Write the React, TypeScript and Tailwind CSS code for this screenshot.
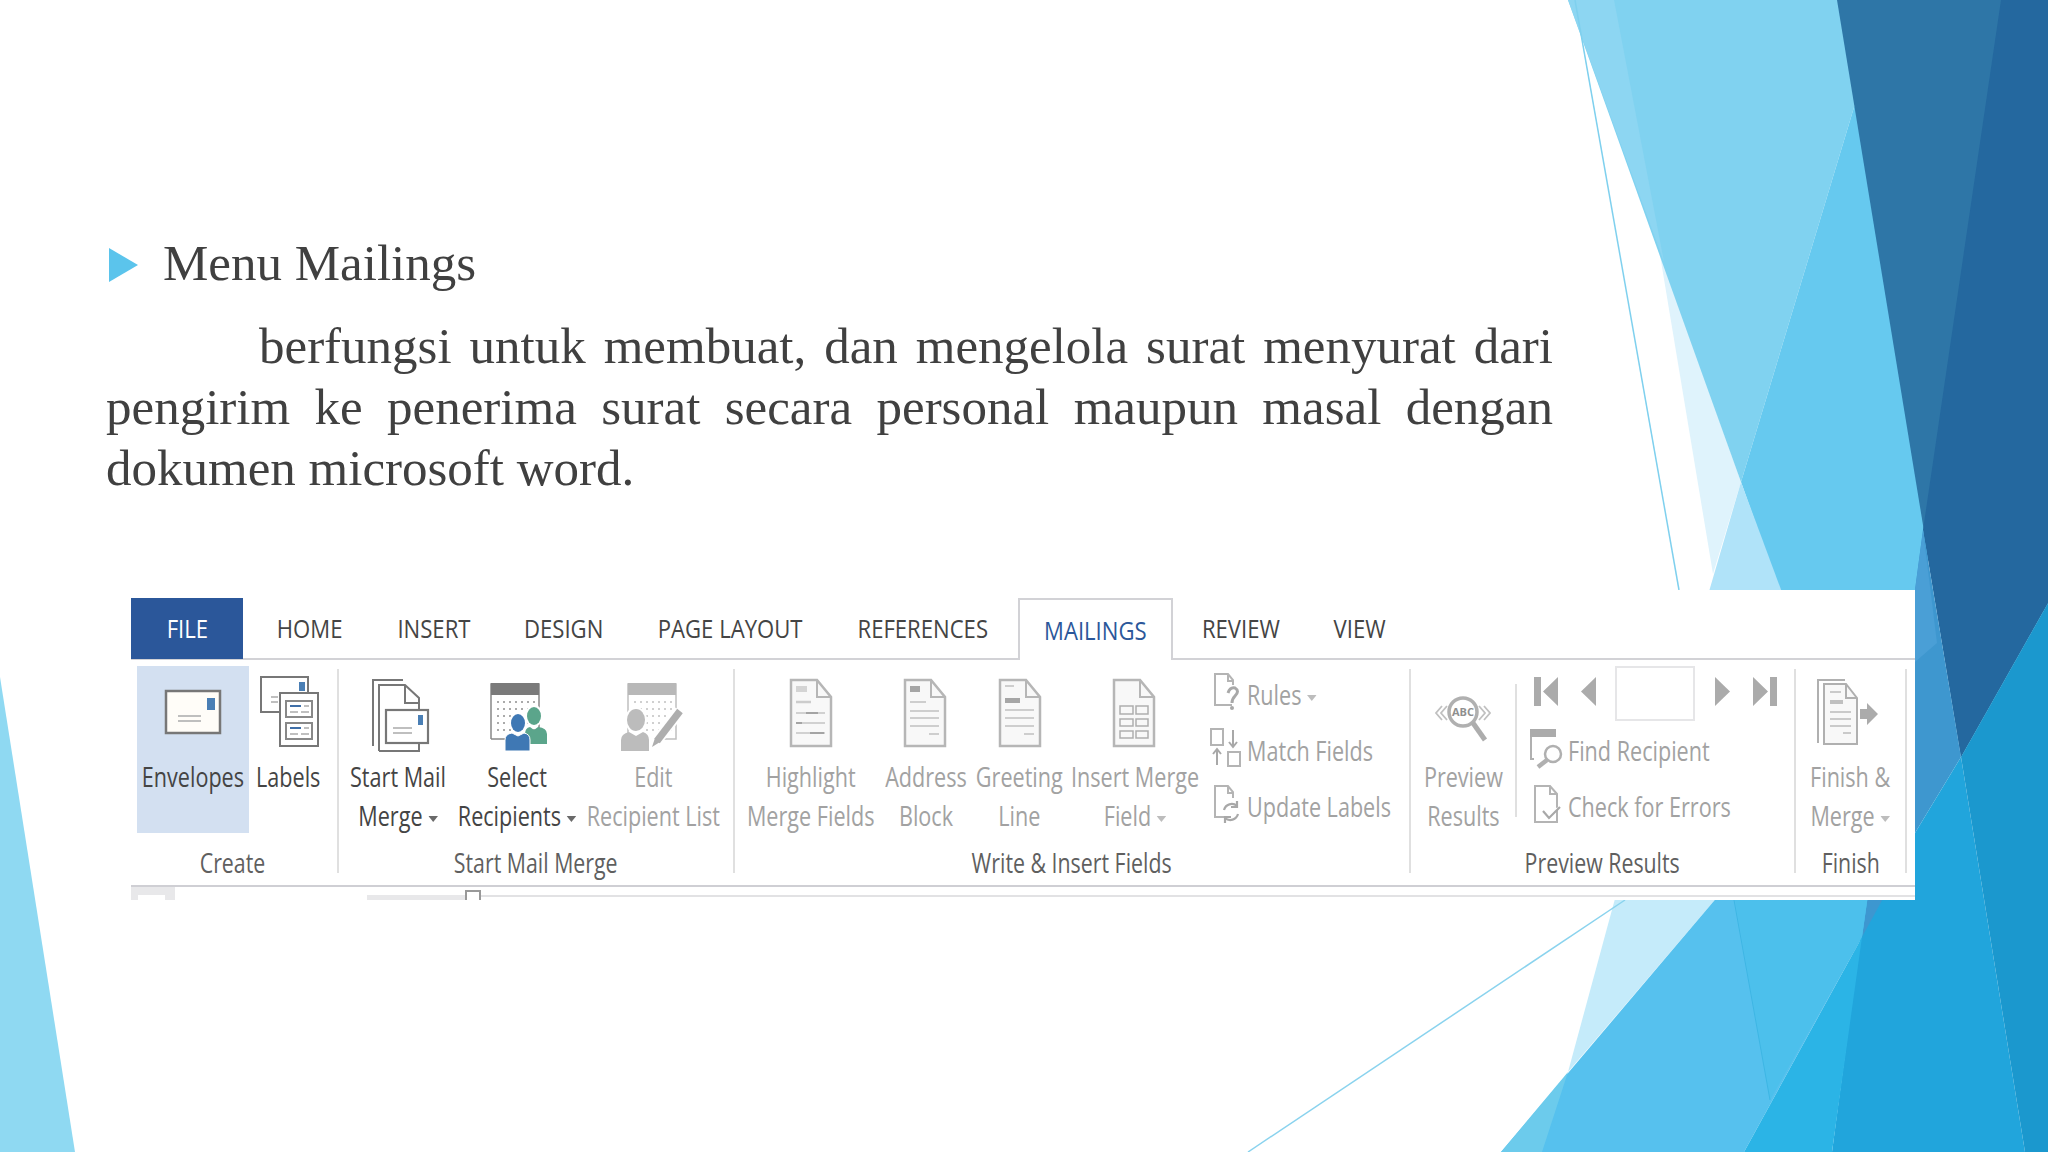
import type { ReactNode } from "react";

const ribbonFont = "font-['Open_Sans','Liberation_Sans',sans-serif]";

const tabs = [
    { label: "HOME", className: "ml-[6px] w-[121px]" },
    { label: "INSERT", className: "w-[127px]" },
    { label: "DESIGN", className: "w-[133px]" },
    { label: "PAGE LAYOUT", className: "w-[200px]" },
    { label: "REFERENCES", className: "w-[185px]" },
];

/** Slide background: the facet shapes of the theme */
function SlideFacets() {
    return (
        <svg className="absolute inset-0" width="2048" height="1152" viewBox="0 0 2048 1152">
            <polygon points="0,677 75,1152 0,1152" fill="#8fd9f2" />
            <polygon points="1659,249 1741,482 1713,574" fill="#dff3fc" />
            <polygon points="1568,0 1850,0 1858,94 1741,482" fill="#80d2f0" />
            <polygon points="1568,0 1614,0 1664,262" fill="#8dd6f2" />
            <polygon points="1858,94 1940,530 1915,595 1781,595 1741,482" fill="#66c9ef" />
            <polygon points="1741,482 1783,595 1708,595" fill="#b0e3f9" />
            <polygon points="1837,0 2048,0 2048,603 1961,757" fill="#2e76a7" />
            <polygon points="2001,0 2048,0 2048,603 1961,757 1923,530" fill="#24689f" />
            <polygon points="1923,530 1961,757 1915,833 1915,590" fill="#3e97cf" />
            <polygon points="1923,530 1937,643 1915,662 1915,590" fill="#4a9fd6" />
            <polygon points="1868,880 1915,833 1961,757 2025,1152 1832,1152" fill="#21a5dc" />
            <polygon points="1961,757 2048,603 2048,1152 2025,1152" fill="#1b98ce" />
            <polygon points="1868,895 1885,895 1862,937" fill="#3d97d0" />
            <polygon points="1616,895 1719,895 1568,1072" fill="#c5ebfa" />
            <polygon points="1719,895 1868,895 1862,937 1744,1152 1501,1152" fill="#56c1ee" />
            <polygon points="1501,1152 1542,1152 1568,1072" fill="#6ccbec" />
            <polygon points="1734,895 1868,895 1862,937 1770,1100" fill="#4cc0ec" />
            <polygon points="1862,937 1744,1152 1832,1152" fill="#2bb4e6" />
            <line x1="1734" y1="900" x2="1770" y2="1100" stroke="#3db6e4" strokeWidth="1" />
            <line x1="1575" y1="0" x2="1679" y2="590" stroke="#7fd0ee" strokeWidth="1.5" />
            <line x1="1625" y1="900" x2="1248" y2="1152" stroke="#8ad3ee" strokeWidth="1.5" />
        </svg>
    );
}

function CalendarDots({ x, color }: { x: number; color: string }) {
    const dots = [];
    for (let r = 0; r < 5; r++) {
        for (let c = 0; c < 7; c++) {
            dots.push(<rect key={`${r}-${c}`} x={x + c * 6} y={35 + r * 7} width="2" height="2" fill={color} />);
        }
    }
    return <>{dots}</>;
}

function DocPage({ x, children }: { x: number; children?: ReactNode }) {
    return (
        <g transform={`translate(${x} 13)`} fill="none" stroke="#b6b6b6" strokeWidth="1.5">
            <path d="M1 1 H27 L41 18 V67 H1 Z" fill="#f8f8f8" strokeWidth="2.5" />
            <path d="M27 1 V18 H41" strokeWidth="2" />
            {children}
        </g>
    );
}

const EnvelopesIcon = (
    <svg width="112" height="92" viewBox="0 0 112 92">
        <rect x="29" y="25" width="54" height="42" fill="#fffdf8" stroke="#777" strokeWidth="2.5" />
        <rect x="70" y="32" width="8" height="12" fill="#4a7fb5" />
        <path d="M41 50 H64 M41 55 H64" stroke="#aaa" strokeWidth="1.6" />
    </svg>
);

const LabelsIcon = (
    <svg width="79" height="92" viewBox="0 0 79 92">
        <path d="M31 46 H12 V11 H59 V27" fill="#fff" stroke="#777" strokeWidth="2" />
        <rect x="50" y="16" width="6" height="9" fill="#4a7fb5" />
        <path d="M22 31 H29 M22 36 H29" stroke="#aaa" strokeWidth="1.6" />
        <rect x="31" y="27" width="38" height="53" fill="#fff" stroke="#777" strokeWidth="2" />
        <rect x="37" y="35" width="26" height="16" fill="#fff" stroke="#888" strokeWidth="2" />
        <rect x="37" y="57" width="26" height="16" fill="#fff" stroke="#888" strokeWidth="2" />
        <path d="M41 40 H52 M41 62 H52" stroke="#3f6fa8" strokeWidth="1.8" />
        <path d="M55 40 H60 M41 46 H49 M52 46 H60 M55 62 H60 M41 68 H49 M52 68 H60" stroke="#aaa" strokeWidth="1.6" />
    </svg>
);

const StartMailIcon = (
    <svg width="112" height="92" viewBox="0 0 112 92" fill="none" stroke="#777" strokeWidth="2">
        <path d="M31 80 V14 H61" />
        <path d="M37 85 V19 H63 L77 32 V44 M63 19 V37 H77 M37 85 H77 V77" />
        <rect x="44" y="44" width="42" height="33" fill="#fff" strokeWidth="2.2" />
        <rect x="76" y="49" width="5" height="10" fill="#4a7fb5" stroke="none" />
        <path d="M51 62 H70 M51 67 H70" stroke="#aaa" strokeWidth="1.6" />
    </svg>
);

const SelectIcon = (
    <svg width="126" height="92" viewBox="0 0 126 92">
        <path d="M37 73 V18 H85 V73" fill="#fff" stroke="#888" strokeWidth="1.5" />
        <path d="M37 73 H55" stroke="#888" strokeWidth="1.5" />
        <rect x="37" y="17" width="48" height="12" fill="#7a7a7a" />
        <CalendarDots x={43} color="#aaa" />
        <ellipse cx="80" cy="50" rx="9" ry="11" fill="#fff" />
        <ellipse cx="80" cy="50" rx="7" ry="9" fill="#5ba58b" />
        <path d="M71 78 V68 Q71 62 76 61 L80 64 L84 61 Q93 62 93 68 V78 Z" fill="#5ba58b" />
        <ellipse cx="64" cy="57" rx="9" ry="11" fill="#fff" />
        <ellipse cx="64" cy="57" rx="7" ry="9" fill="#3f78b4" />
        <path d="M51 85 V74 Q51 68 58 67 L64 70 L70 67 Q76 68 76 74 V85 Z" fill="#3f78b4" stroke="#fff" strokeWidth="1" />
    </svg>
);

const EditIcon = (
    <svg width="146" height="92" viewBox="0 0 146 92">
        <path d="M48 73 V18 H96 V73 H80" fill="#fff" stroke="#c0c0c0" strokeWidth="1.5" />
        <rect x="48" y="17" width="48" height="12" fill="#b8b8b8" />
        <CalendarDots x={54} color="#d0d0d0" />
        <ellipse cx="56" cy="54" rx="11" ry="13" fill="#fff" />
        <ellipse cx="56" cy="54" rx="9" ry="11" fill="#bcbcbc" />
        <path d="M41 85 V74 Q41 68 49 66 L56 70 L63 66 Q69 68 69 74 V85 Z" fill="#bcbcbc" />
        <line x1="75" y1="77" x2="100" y2="45" stroke="#fff" strokeWidth="11" />
        <line x1="77" y1="75" x2="100" y2="45" stroke="#aeaeae" strokeWidth="7" />
        <polygon points="72,81 75,72 80,76" fill="#aeaeae" />
    </svg>
);

const HighlightIcon = (
    <svg width="126" height="92" viewBox="0 0 126 92">
        <DocPage x={42}>
            <rect x="6" y="7" width="11" height="6" fill="#d4d4d4" stroke="none" />
            <path d="M6 23 H21" stroke="#ccc" strokeWidth="2.5" />
            <path d="M6 34 H35 M6 44 H35 M6 54 H35" stroke="#c4c4c4" />
            <path d="M16 34 H28 M6 44 H12 M20 54 H34" stroke="#a4a4a4" strokeWidth="1.8" />
        </DocPage>
    </svg>
);

const AddressIcon = (
    <svg width="104" height="92" viewBox="0 0 104 92">
        <DocPage x={30}>
            <rect x="6" y="7" width="10" height="6" fill="#a6a6a6" stroke="none" />
            <path d="M6 23 H22 M6 32 H35 M6 39 H35 M6 47 H35 M25 55 H35" stroke="#c0c0c0" />
        </DocPage>
    </svg>
);

const GreetingIcon = (
    <svg width="82" height="92" viewBox="0 0 82 92">
        <DocPage x={21}>
            <rect x="6" y="19" width="15" height="5" fill="#a6a6a6" stroke="none" />
            <path d="M6 7 H15 M6 31 H35 M6 39 H35 M6 47 H35 M25 55 H35" stroke="#c0c0c0" />
        </DocPage>
    </svg>
);

const InsertIcon = (
    <svg width="150" height="92" viewBox="0 0 150 92">
        <DocPage x={53}>
            <path d="M7 27 H20 V35 H7 Z M23 27 H35 V35 H23 Z M7 40 H20 V47 H7 Z M23 40 H35 V47 H23 Z M7 52 H20 V59 H7 Z M23 52 H35 V59 H23 Z" stroke="#aeaeae" />
        </DocPage>
    </svg>
);

const PreviewIcon = (
    <svg width="104" height="92" viewBox="0 0 104 92" fill="none" stroke="#c0c0c0" strokeWidth="1.8">
        <path d="M31 40 L25 47 L31 54 M36 40 L30 47 L36 54 M73 40 L79 47 L73 54 M68 40 L74 47 L68 54" />
        <circle cx="52" cy="46" r="14" fill="#fff" stroke="#b0b0b0" strokeWidth="3.5" />
        <line x1="62" y1="57" x2="74" y2="74" stroke="#adadad" strokeWidth="5" />
        <text x="52" y="50" textAnchor="middle" fontSize="11" fontWeight="700" fill="#8f8f8f" stroke="none" fontFamily="'Open Sans',sans-serif">
            ABC
        </text>
    </svg>
);

const FinishIcon = (
    <svg width="111" height="92" viewBox="0 0 111 92" fill="none" stroke="#b0b0b0" strokeWidth="2">
        <path d="M23 77 V14 H50" />
        <path d="M29 18 H51 L62 32 V78 H29 Z" fill="#f8f8f8" />
        <path d="M51 18 V32 H62" />
        <path d="M35 26 H46 M35 46 H56 M35 53 H56 M35 60 H56 M48 67 H56" strokeWidth="1.6" stroke="#bbb" />
        <rect x="35" y="34" width="13" height="4" fill="#c0c0c0" stroke="none" />
        <polygon points="65,43 72,43 72,37 83,48 72,59 72,53 65,53" fill="#ababab" stroke="none" />
    </svg>
);

const RulesIcon = (
    <svg width="37" height="56" viewBox="0 0 37 56" fill="none" stroke="#b4b4b4" strokeWidth="2">
        <path d="M22 38 H5 V7 H18 L23 13 V18 M18 7 V14 H23" />
        <path d="M18 26 Q20 20 25 21 Q30 24 25 29 Q22 32 22 36" stroke="#a8a8a8" strokeWidth="3" />
        <circle cx="22" cy="41" r="2" fill="#a8a8a8" stroke="none" />
    </svg>
);

const MatchIcon = (
    <svg width="37" height="56" viewBox="0 0 37 56" fill="none" stroke="#b4b4b4" strokeWidth="2">
        <rect x="1" y="6" width="12" height="16" />
        <rect x="18" y="29" width="12" height="14" />
        <path d="M23 7 V23 M19 19 L23 24 L27 19 M7 42 V27 M3 31 L7 26 L11 31" stroke="#a8a8a8" />
    </svg>
);

const UpdateIcon = (
    <svg width="37" height="56" viewBox="0 0 37 56" fill="none" stroke="#b4b4b4" strokeWidth="2">
        <path d="M15 38 H5 V7 H18 L23 13 V19 M18 7 V14 H23" />
        <path d="M14 31 A8 8 0 0 1 27 27 M28 35 A8 8 0 0 1 15 39 M27 22 V28 H21 M15 44 V38 H21" stroke="#a8a8a8" strokeWidth="2.2" />
    </svg>
);

const FindIcon = (
    <svg width="38" height="56" viewBox="0 0 38 56" fill="none" stroke="#b0b0b0" strokeWidth="2">
        <rect x="0" y="6" width="26" height="8" fill="#ababab" stroke="none" />
        <path d="M1 14 V36 H4" />
        <circle cx="23" cy="31" r="8" fill="#fff" strokeWidth="2.5" />
        <line x1="17" y1="37" x2="8" y2="44" strokeWidth="4.5" />
    </svg>
);

const CheckIcon = (
    <svg width="38" height="56" viewBox="0 0 38 56" fill="none" stroke="#b4b4b4" strokeWidth="2">
        <path d="M5 7 H20 L27 15 V43 H5 Z M20 7 V15 H27" />
        <path d="M13 32 L19 39 L30 28" stroke="#a8a8a8" strokeWidth="2.2" fill="#fff" />
    </svg>
);

function Caret({ muted }: { muted?: boolean }) {
    return (
        <svg className="ml-[7px] inline-block align-middle" width="12" height="6" viewBox="0 0 12 6">
            <polygon points="0,0 12,0 6,6" fill={muted ? "#bdbdbd" : "#6a6a6a"} />
        </svg>
    );
}

function NavArrow({ kind }: { kind: "first" | "prev" | "next" | "last" }) {
    const wide = kind === "first" || kind === "last";
    return (
        <svg className="mb-[7px]" width={wide ? 24 : 15} height="29" viewBox={`0 0 ${wide ? 24 : 15} 29`} fill="#ababab">
            {kind === "first" && <path d="M0 0 H7 V29 H0 Z M24 0 L9 14.5 L24 29 Z" />}
            {kind === "prev" && <path d="M15 0 L0 14.5 L15 29 Z" />}
            {kind === "next" && <path d="M0 0 L15 14.5 L0 29 Z" />}
            {kind === "last" && <path d="M17 0 H24 V29 H17 Z M0 0 L15 14.5 L0 29 Z" />}
        </svg>
    );
}

function RibbonButton({
    icon,
    lines,
    className,
    muted,
    caret,
}: {
    icon: ReactNode;
    lines: string[];
    className: string;
    muted?: boolean;
    caret?: boolean;
}) {
    return (
        <div className={`flex h-[167px] flex-col items-center text-[27px] leading-[39px] whitespace-nowrap ${muted ? "text-[#a2a2a2]" : "text-[#444]"} ${className}`}>
            <div className="h-[91px]">{icon}</div>
            {/* the ribbon in the picture is a squeezed screenshot */}
            <div className="flex scale-x-[.8] flex-col items-center">
                <span>{lines[0]}</span>
                {lines[1] && (
                    <span>
                        {lines[1]}
                        {caret && <Caret muted={muted} />}
                    </span>
                )}
            </div>
        </div>
    );
}

function SmallRow({ icon, label, caret }: { icon: ReactNode; label: string; caret?: boolean }) {
    return (
        <div className="flex h-[56px] shrink-0 items-center text-[27px] whitespace-nowrap text-[#a2a2a2]">
            {icon}
            <span className="origin-left scale-x-[.8]">
                {label}
                {caret && <Caret muted />}
            </span>
        </div>
    );
}

function RibbonGroup({ label, className, rowClassName, children }: { label: string; className: string; rowClassName?: string; children: ReactNode }) {
    return (
        <div className={`flex h-[204px] flex-col ${className}`}>
            <div className={`-mt-[3px] flex h-[167px] ${rowClassName ?? ""}`}>{children}</div>
            <div className="mt-[18px] flex h-[24px] justify-center text-[27px] leading-[24px] whitespace-nowrap text-[#5f5f5f]">
                <span className="scale-x-[.79]">{label}</span>
            </div>
        </div>
    );
}

function Tab({ label, className }: { label: string; className: string }) {
    return (
        <div className={`flex items-center justify-center whitespace-nowrap ${className}`}>
            <span className="scale-x-[.85]">{label}</span>
        </div>
    );
}

function Ribbon() {
    return (
        <div className={`ml-[131px] flex h-[310px] w-[1784px] flex-col bg-white ${ribbonFont}`}>
            {/* tab strip */}
            <div className="mt-[8px] flex h-[62px] border-b-2 border-[#d2d2d6] text-[26px] text-[#444]">
                <Tab label="FILE" className="h-[61px] w-[112px] bg-[#2b579a] text-white" />
                {tabs.map((t) => (
                    <Tab key={t.label} label={t.label} className={`h-[60px] ${t.className}`} />
                ))}
                <Tab label="MAILINGS" className="ml-[3px] h-[62px] w-[155px] border-x-2 border-t-2 border-[#d2d2d6] bg-white text-[#2b579a]" />
                <Tab label="REVIEW" className="h-[60px] w-[136px]" />
                <Tab label="VIEW" className="h-[60px] w-[102px]" />
            </div>

            {/* ribbon body */}
            <div className="flex h-[225px] pt-[9px]">
                <RibbonGroup label="Create" className="w-[208px] border-r-2 border-[#e0e0e0] pr-[4px]" rowClassName="pl-[6px]">
                    <RibbonButton icon={EnvelopesIcon} lines={["Envelopes"]} className="w-[112px] bg-[#d3e0f1]" />
                    <RibbonButton icon={LabelsIcon} lines={["Labels"]} className="w-[79px]" />
                </RibbonGroup>
                <RibbonGroup label="Start Mail Merge" className="w-[396px] border-r-2 border-[#e0e0e0]" rowClassName="pl-[3px]">
                    <RibbonButton icon={StartMailIcon} lines={["Start Mail", "Merge"]} caret className="w-[112px]" />
                    <RibbonButton icon={SelectIcon} lines={["Select", "Recipients"]} caret className="w-[126px]" />
                    <RibbonButton icon={EditIcon} lines={["Edit", "Recipient List"]} muted className="w-[146px]" />
                </RibbonGroup>
                <RibbonGroup label="Write & Insert Fields" className="w-[676px] border-r-2 border-[#e0e0e0]" rowClassName="pl-[13px]">
                    <RibbonButton icon={HighlightIcon} lines={["Highlight", "Merge Fields"]} muted className="w-[126px]" />
                    <RibbonButton icon={AddressIcon} lines={["Address", "Block"]} muted className="w-[104px]" />
                    <RibbonButton icon={GreetingIcon} lines={["Greeting", "Line"]} muted className="w-[82px]" />
                    <RibbonButton icon={InsertIcon} lines={["Insert Merge", "Field"]} muted caret className="w-[150px]" />
                    <div className="flex flex-col pt-[1px]">
                        <SmallRow icon={RulesIcon} label="Rules" caret />
                        <SmallRow icon={MatchIcon} label="Match Fields" />
                        <SmallRow icon={UpdateIcon} label="Update Labels" />
                    </div>
                </RibbonGroup>
                <RibbonGroup label="Preview Results" className="w-[385px] border-r-2 border-[#e0e0e0]">
                    <RibbonButton icon={PreviewIcon} lines={["Preview", "Results"]} muted className="w-[104px]" />
                    <div className="mt-[18px] h-[133px] w-[2px] bg-[#e0e0e0]" />
                    <div className="flex flex-col pt-[1px]">
                        <div className="flex h-[56px] shrink-0 items-center">
                            <div className="ml-[17px]"><NavArrow kind="first" /></div>
                            <div className="ml-[23px]"><NavArrow kind="prev" /></div>
                            <div className="-mt-[3px] ml-[19px] h-[55px] w-[80px] border-2 border-[#e6e6e8] bg-white" />
                            <div className="ml-[20px]"><NavArrow kind="next" /></div>
                            <div className="ml-[23px]"><NavArrow kind="last" /></div>
                        </div>
                        <div className="ml-[13px] shrink-0">
                            <SmallRow icon={FindIcon} label="Find Recipient" />
                            <SmallRow icon={CheckIcon} label="Check for Errors" />
                        </div>
                    </div>
                </RibbonGroup>
                <RibbonGroup label="Finish" className="w-[111px] border-r-2 border-[#e0e0e0]">
                    <RibbonButton icon={FinishIcon} lines={["Finish &", "Merge"]} muted caret className="w-full" />
                </RibbonGroup>
            </div>

            {/* what shows of the document ruler under the ribbon */}
            <div className="flex h-[15px] border-t-2 border-[#cfcfd4]">
                <div className="h-[13px] w-[44px] bg-[#e8e8ea] pt-[8px] pl-[7px]">
                    <div className="h-[5px] w-[27px] bg-white" />
                </div>
                <div className="w-[192px]" />
                <div className="mt-[8px] h-[5px] w-[98px] bg-[#e8e8ea]" />
                <div className="mt-[3px] h-[10px] w-[16px] border-x-2 border-t-2 border-[#999] bg-white" />
                <div className="mt-[8px] h-[2px] flex-1 bg-[#e2e2e4]" />
            </div>
        </div>
    );
}

export default function App() {
    return (
        <div className="relative h-[1152px] w-[2048px] overflow-hidden bg-white">
            <SlideFacets />
            <div className="relative pt-[233px]">
                <div className="flex items-center font-['Liberation_Serif',serif] text-[51px] leading-[61px] text-[#404040]">
                    <svg className="mt-[2px] ml-[109px]" width="29" height="34" viewBox="0 0 29 34">
                        <polygon points="0,0 29,17 0,34" fill="#5bc4ec" />
                    </svg>
                    <span className="ml-[25px]">Menu Mailings</span>
                </div>
                <p className="mt-[22px] ml-[106px] w-[1447px] text-justify indent-[153px] font-['Liberation_Serif',serif] text-[51px] leading-[61px] text-[#404040]">
                    berfungsi untuk membuat, dan mengelola surat menyurat dari pengirim ke penerima surat secara personal maupun masal dengan dokumen microsoft word.
                </p>
                <div className="mt-[91px]">
                    <Ribbon />
                </div>
            </div>
        </div>
    );
}
